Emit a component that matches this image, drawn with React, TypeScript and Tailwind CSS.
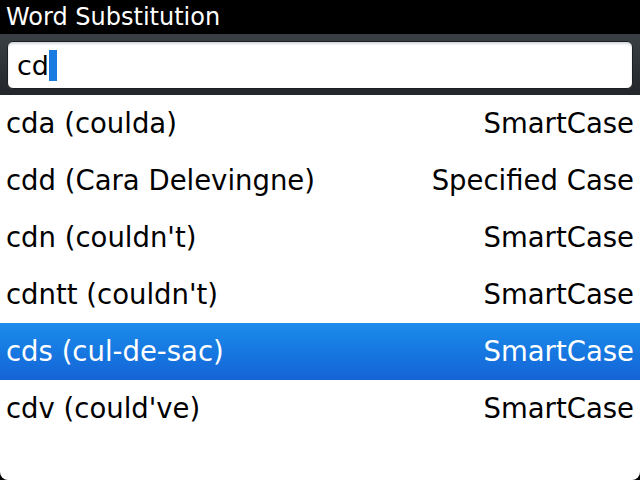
import React from "react";

const rows: [string, string][] = [
  ["cda (coulda)", "SmartCase"],
  ["cdd (Cara Delevingne)", "Specified Case"],
  ["cdn (couldn't)", "SmartCase"],
  ["cdntt (couldn't)", "SmartCase"],
  ["cds (cul-de-sac)", "SmartCase"],
  ["cdv (could've)", "SmartCase"],
];

export default function App() {
  return (
    <div
      className="w-[640px] h-[480px] bg-black overflow-hidden flex flex-col"
      style={{ fontFamily: '"DejaVu Sans", sans-serif' }}
    >
      <div className="h-[34px] bg-black text-white text-[24px] leading-[34px] pl-[6px] shrink-0">
        Word Substitution
      </div>
      <div className="h-[61px] shrink-0 bg-gradient-to-b from-[#3a3f44] to-[#23272b] px-[7px] pt-[7px] pb-[6px]">
        <div className="h-[48px] rounded-[6px] border border-[#1c1f22] bg-white flex items-center pl-[9px] shadow-[inset_0_2px_2px_#d5dadf]">
          <span className="text-[27px] text-black leading-none">cd</span>
          <span className="w-[8px] h-[31px] bg-[#1a7be0]" />
        </div>
      </div>
      <div className="flex-1 bg-white rounded-bl-[8px] rounded-br-[8px] flex flex-col">
        {rows.map(([l, r], i) => (
          <div
            key={i}
            className={
              "h-[57px] flex items-center justify-between px-[6px] text-[27.5px] " +
              (i === 4
                ? "bg-gradient-to-b from-[#1b8ceb] to-[#1563d6] text-white"
                : "text-black")
            }
          >
            <span>{l}</span>
            <span>{r}</span>
          </div>
        ))}
      </div>
    </div>
  );
}
